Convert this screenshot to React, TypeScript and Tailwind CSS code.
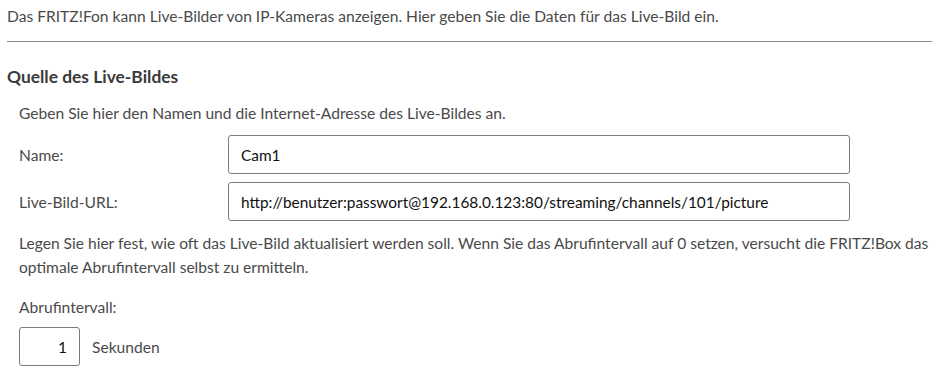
const App = () => {
  return (
    <div
      className="w-[943px] h-[392px] bg-white text-[15.6px] leading-[24px] text-[#4a4a4a]"
      style={{ fontFamily: "Lato, 'Noto Sans', sans-serif" }}
    >
      <div className="pl-[7px] pr-[11px] pt-[4px]">
        <p>
          Das FRITZ!Fon kann Live-Bilder von IP-Kameras anzeigen. Hier geben
          Sie die Daten für das Live-Bild ein.
        </p>
        <hr className="mt-[13px] border-t border-[#8a8a8a]" />
        <h2 className="mt-[23px] text-[17.4px] font-bold text-[#3a3a3a]">
          Quelle des Live-Bildes
        </h2>
      </div>
      <div className="pl-[19px] pr-[8px]">
        <p className="mt-[12px]">
          Geben Sie hier den Namen und die Internet-Adresse des Live-Bildes an.
        </p>
        <div className="mt-[10px] flex flex-col gap-[8px]">
          <div className="flex items-center">
            <label className="w-[209px]">Name:</label>
            <input
              type="text"
              defaultValue="Cam1"
              className="h-[39px] w-[622px] rounded-[3px] border border-[#7a7a7a] px-[12px] text-[15.4px] text-[#111]"
            />
          </div>
          <div className="flex items-center">
            <label className="w-[209px]">Live-Bild-URL:</label>
            <input
              type="text"
              defaultValue="http://benutzer:passwort@192.168.0.123:80/streaming/channels/101/picture"
              className="h-[39px] w-[622px] rounded-[3px] border border-[#7a7a7a] px-[12px] text-[15.4px] text-[#111]"
            />
          </div>
        </div>
        <p className="mt-[10px]">
          Legen Sie hier fest, wie oft das Live-Bild aktualisiert werden soll.
          Wenn Sie das Abrufintervall auf 0 setzen, versucht die FRITZ!Box das
          optimale Abrufintervall selbst zu ermitteln.
        </p>
        <p className="mt-[16px]">Abrufintervall:</p>
        <div className="mt-[8px] flex items-center gap-[12px]">
          <input
            type="text"
            defaultValue="1"
            className="h-[39px] w-[61px] rounded-[3px] border border-[#7a7a7a] px-[12px] text-right text-[15.4px] text-[#111]"
          />
          <span>Sekunden</span>
        </div>
      </div>
    </div>
  );
};

export default App;
